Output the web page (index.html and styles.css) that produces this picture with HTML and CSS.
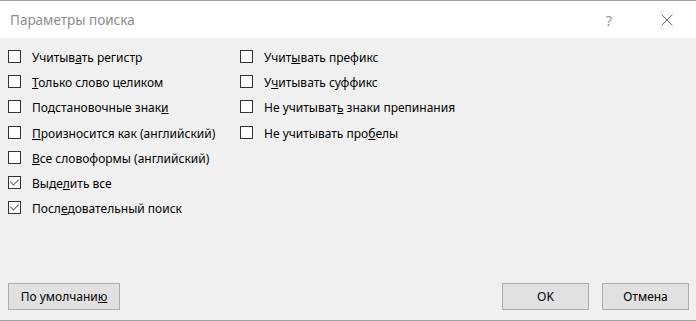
FILE: index.html
```html
<!DOCTYPE html>
<html lang="ru">
<head>
    <meta charset="UTF-8">
    <title>Параметры поиска</title>
    <link rel="stylesheet" href="styles.css">
</head>
<body>
    <div class="dialog">
        <div class="titlebar">
            <div class="title">Параметры поиска</div>
            <div class="help">?</div>
            <div class="close">
                <svg width="12" height="12" viewBox="0 0 12 12">
                    <path d="M0.5 0.5 L11.5 11.5 M11.5 0.5 L0.5 11.5" stroke="#666" stroke-width="1" fill="none"/>
                </svg>
            </div>
        </div>

        <div class="content">
            <div class="options">
                <div class="column">
                    <label class="option"><span class="box"></span><span>Учитыв<u>а</u>ть регистр</span></label>
                    <label class="option"><span class="box"></span><span><u>Т</u>олько слово целиком</span></label>
                    <label class="option"><span class="box"></span><span>Подстановочные знак<u>и</u></span></label>
                    <label class="option"><span class="box"></span><span><u>П</u>роизносится как (английский)</span></label>
                    <label class="option"><span class="box"></span><span><u>В</u>се словоформы (английский)</span></label>
                    <label class="option"><span class="box checked"></span><span>Выде<u>л</u>ить все</span></label>
                    <label class="option"><span class="box checked"></span><span>Посл<u>е</u>довательный поиск</span></label>
                </div>
                <div class="column">
                    <label class="option"><span class="box"></span><span>Учит<u>ы</u>вать префикс</span></label>
                    <label class="option"><span class="box"></span><span>У<u>ч</u>итывать суффикс</span></label>
                    <label class="option"><span class="box"></span><span>Не учитыват<u>ь</u> знаки препинания</span></label>
                    <label class="option"><span class="box"></span><span>Не учитывать про<u>б</u>елы</span></label>
                </div>
            </div>

            <div class="footer">
                <button class="btn btn-default">По умолчани<u>ю</u></button>
                <div class="footer-right">
                    <button class="btn">OK</button>
                    <button class="btn">Отмена</button>
                </div>
            </div>
        </div>
    </div>
</body>
</html>
```

FILE: styles.css
```css
* {
    margin: 0;
    padding: 0;
    box-sizing: border-box;
}

body {
    font-family: 'Noto Sans', 'Liberation Sans', sans-serif;
    font-size: 12px;
    color: #000;
    background-color: #f0f0f0;
}

.dialog {
    width: 696px;
    height: 321px;
    display: flex;
    flex-direction: column;
    border-top: 1px solid #a0a0a0;
    border-bottom: 1px solid #a0a0a0;
}

.titlebar {
    height: 37px;
    background-color: white;
    display: flex;
    align-items: center;
    padding-left: 10px;
}

.title {
    flex: 1;
    font-size: 13.5px;
    color: #8c8c8c;
}

.help {
    font-size: 15px;
    color: #999;
    width: 52px;
    margin-right: 20px;
    text-align: center;
}

.close {
    width: 41px;
    padding-left: 6px;
    display: flex;
    align-items: center;
}

.content {
    flex: 1;
    display: flex;
    flex-direction: column;
    justify-content: space-between;
    padding: 6px 7px 10px 8px;
}

.options {
    display: grid;
    grid-template-columns: 232px auto;
}

.option {
    display: flex;
    align-items: center;
    height: 25.2px;
    gap: 11px;
}

.option span:last-child {
    padding-top: 2px;
}

.box {
    width: 13px;
    height: 13px;
    border: 1px solid #333;
    background-color: white;
    position: relative;
}

.box.checked::after {
    content: '';
    position: absolute;
    left: 3px;
    top: 0px;
    width: 4px;
    height: 7px;
    border-right: 1px solid #555;
    border-bottom: 1px solid #555;
    transform: rotate(45deg);
}

.footer {
    display: flex;
    justify-content: space-between;
}

.footer-right {
    display: flex;
    gap: 13px;
}

.btn {
    font-family: inherit;
    font-size: 12px;
    color: #000;
    height: 27px;
    width: 87px;
    background-color: #e1e1e1;
    border: 1px solid #adadad;
}

.btn-default {
    width: 112px;
}
```
